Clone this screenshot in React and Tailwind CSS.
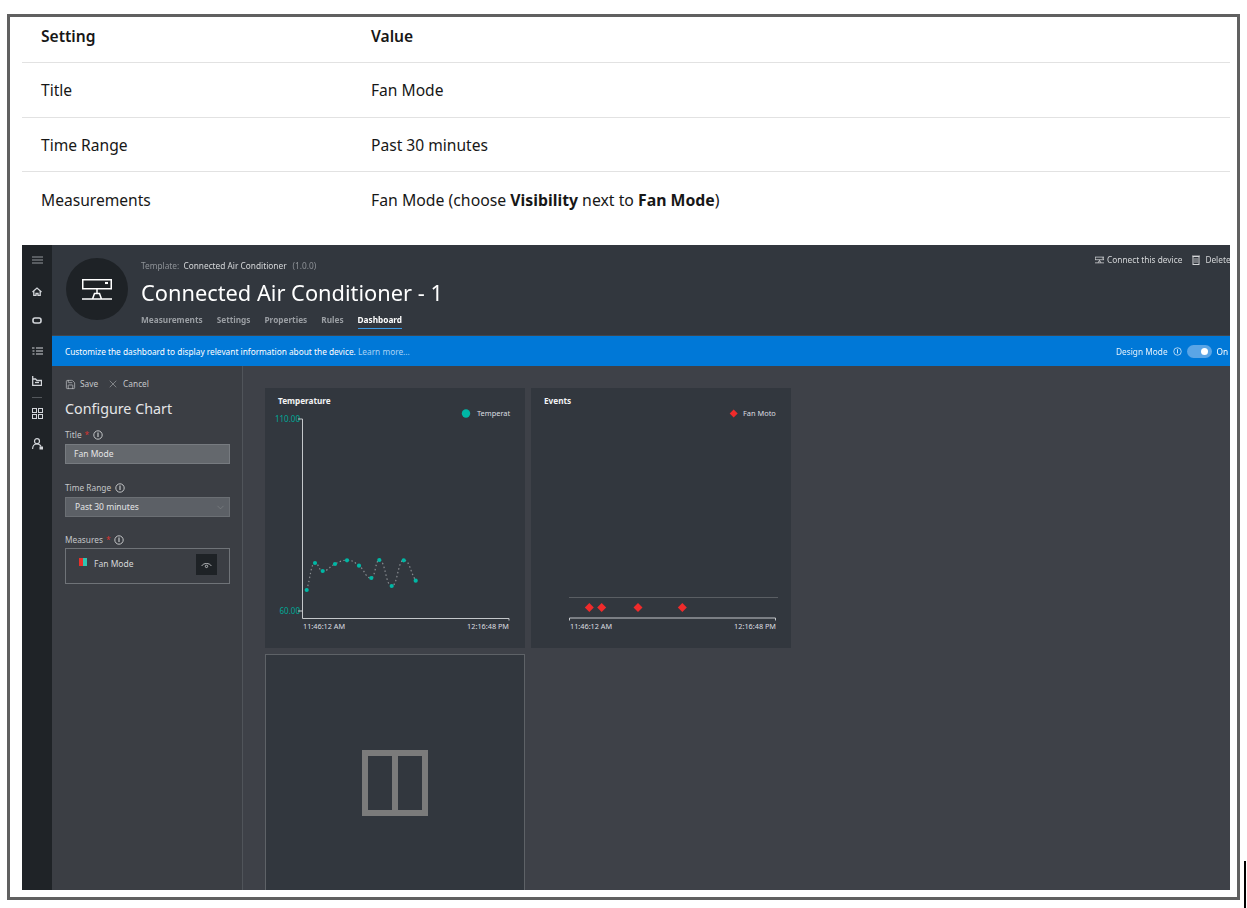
import { ChevronDown, Save, X } from "lucide-react";

const font = "font-['Noto_Sans',_'Open_Sans',_sans-serif]";

const rows = [
  { setting: "Title", value: "Fan Mode", height: "h-[55px] border-b border-[#e2e2e2]", pad: "pt-[2px]" },
  { setting: "Time Range", value: "Past 30 minutes", height: "h-[54px] border-b border-[#e2e2e2]", pad: "pt-[4px]" },
  {
    setting: "Measurements",
    value: (
      <span className="text-[15.800px]">
        Fan Mode (choose <b>Visibility</b> next to <b>Fan Mode</b>)
      </span>
    ),
    height: "h-[55px]",
    pad: "pt-[4px]",
  },
];

const tabs = ["Measurements", "Settings", "Properties", "Rules", "Dashboard"];

const tempPoints = [
  [41.7, 202],
  [50, 175],
  [57.7, 183],
  [70, 176],
  [82, 172.3],
  [94, 177.7],
  [106.3, 190],
  [114.3, 172],
  [126.7, 198],
  [138.7, 172.3],
  [150.7, 192.7],
];

// monotone curve: flat at peaks and troughs like the chart's smoothed line
const smoothPath = (pts) => {
  const slope = (a, b) => (b[1] - a[1]) / (b[0] - a[0]);
  const tangent = (i) => {
    if (i === 0) return slope(pts[0], pts[1]);
    if (i === pts.length - 1) return slope(pts[i - 1], pts[i]);
    const s0 = slope(pts[i - 1], pts[i]);
    const s1 = slope(pts[i], pts[i + 1]);
    return s0 * s1 <= 0 ? 0 : (s0 + s1) / 2;
  };
  let d = `M${pts[0][0]} ${pts[0][1]}`;
  for (let i = 0; i < pts.length - 1; i++) {
    const [x1, y1] = pts[i];
    const [x2, y2] = pts[i + 1];
    const h = (x2 - x1) / 2;
    d += ` C${x1 + h} ${y1 + tangent(i) * h} ${x2 - h} ${y2 - tangent(i + 1) * h} ${x2} ${y2}`;
  }
  return d;
};

const InfoIcon = ({ className }) => (
  <svg viewBox="0 0 10 10" className={className} fill="none" stroke="currentColor">
    <circle cx="5" cy="5" r="4.200" strokeWidth="0.9" />
    <path d="M5 2.500v4.600" strokeWidth="1.100" />
  </svg>
);

const DeviceIcon = ({ className, sw = 1.5 }) => (
  <svg viewBox="0 0 30 21" className={className} fill="none" stroke="currentColor" strokeWidth={sw}>
    <rect x="0.750" y="0.750" width="28.500" height="9" />
    <path d="M23 4h3" strokeWidth={sw * 1.4} />
    <path d="M15 10v4M10.500 20l2-5.500h5l2 5.500M0 20h30" />
  </svg>
);

const Sidebar = () => (
  <div className="w-[30px] shrink-0 bg-[#1f2327] flex flex-col items-center pt-[11px] text-[#d3d6da]">
    <svg viewBox="0 0 11 8" className="w-[11px] h-[8px] text-[#6d7175]" stroke="currentColor" strokeWidth="1.400">
      <path d="M0 1h11M0 4h11M0 7h11" />
    </svg>
    <svg viewBox="0 0 10 9" className="w-[10px] h-[9px] mt-[23px]" fill="none" stroke="currentColor" strokeWidth="1.300">
      <path d="M0.500 5 5 1l4.500 4M1.800 4v4.500h2.200V6.500h2v2h2.200V4" />
    </svg>
    <svg viewBox="0 0 10 7" className="w-[10px] h-[7px] mt-[21px]" fill="none" stroke="currentColor" strokeWidth="1.600">
      <rect x="1" y="1" width="8" height="5" rx="2" />
    </svg>
    <svg viewBox="0 0 11 8" className="w-[11px] h-[8px] mt-[23px]" fill="none" stroke="currentColor" strokeWidth="1.200">
      <path d="M4 1h7M4 4h7M4 7h7M0 1h2.500M0.500 4h2M0.500 7h2" />
    </svg>
    <svg viewBox="0 0 10 10" className="w-[10px] h-[10px] mt-[21px]" fill="none" stroke="currentColor" strokeWidth="1.300">
      <path d="M0.700 0v9.300h8.800V4.500H5L3.500 3H0.700" />
      <path d="M3 6.500h4" />
    </svg>
    <div className="w-[10px] h-px bg-[#54585c] mt-[11px]" />
    <div className="grid grid-cols-2 gap-px mt-[10px]">
      <div className="w-[5px] h-[5px] border border-[#d3d6da]" />
      <div className="w-[5px] h-[5px] border border-[#d3d6da]" />
      <div className="w-[5px] h-[5px] border border-[#d3d6da]" />
      <div className="w-[5px] h-[5px] border border-[#d3d6da]" />
    </div>
    <svg viewBox="0 0 11 12" className="w-[11px] h-[12px] mt-[19px]" fill="none" stroke="currentColor" strokeWidth="1.200">
      <circle cx="5" cy="3.200" r="2.500" />
      <path d="M0.600 11C0.600 8 2.500 6 5 6s3.500 1.300 4 2.500" />
      <rect x="7.500" y="8.500" width="3.500" height="3" fill="currentColor" stroke="none" />
    </svg>
  </div>
);

const Header = () => (
  <div className="h-[91px] bg-[#32373e] border-b border-[#42464c] flex items-start relative overflow-hidden">
    <div className="ml-[14px] mt-[13px] w-[62px] h-[62px] rounded-full bg-[#1e2226] flex items-center justify-center text-white">
      <DeviceIcon className="w-[30px] h-[21px]" />
    </div>
    <div className="ml-[13px] mt-[15px]">
      <div className="text-[8.300px] leading-[12px] text-[#8e9297]">
        Template: <span className="text-[#d5d7d9] ml-[2px]">Connected Air Conditioner</span>
        <span className="ml-[6px]">(1.0.0)</span>
      </div>
      <div className="text-[21.800px] leading-[30px] mt-[6px] text-white">Connected Air Conditioner - 1</div>
      <div className="flex gap-[14px] mt-[6px] text-[8.250px] leading-[12px] font-bold text-[#9a9ea3]">
        {tabs.map((t) => (
          <span
            key={t}
            className={t === "Dashboard" ? "text-white border-b border-[#3a9be8] pb-[2px]" : ""}
          >
            {t}
          </span>
        ))}
      </div>
    </div>
    <div className="absolute left-[1043px] top-[9px] flex items-center gap-[10px] text-[8.300px] leading-[12px] text-[#d5d7d9] whitespace-nowrap">
      <span className="flex items-center gap-[3px]">
        <DeviceIcon className="w-[9px] h-[8px]" sw={2.500} />
        Connect this device
      </span>
      <span className="flex items-center gap-[5px]">
        <svg viewBox="0 0 8 10" className="w-[8px] h-[10px]" fill="none" stroke="currentColor">
          <rect x="1" y="1.500" width="6" height="8" />
          <path d="M3 3v5M5 3v5M0 1h8" strokeWidth="0.800" />
        </svg>
        Delete
      </span>
    </div>
  </div>
);

const InfoBar = () => (
  <div className="h-[30px] bg-[#0078d7] flex items-center pl-[13px] pt-[2px] text-[8.300px] text-white relative overflow-hidden">
    <span>
      Customize the dashboard to display relevant information about the device.{" "}
      <span className="text-[#a9d3f5]">Learn more...</span>
    </span>
    <div className="absolute left-[1064px] top-[9px] flex items-center whitespace-nowrap">
      <span className="text-[#e5f1fb] mt-[1px]">Design Mode</span>
      <InfoIcon className="w-[9px] h-[9px] ml-[5px] text-[#cfe5f7]" />
      <span className="w-[25px] h-[13px] ml-[5px] rounded-full bg-[#5aa5e6] flex items-center justify-end pr-[4px]">
        <span className="w-[7px] h-[7px] rounded-full bg-white" />
      </span>
      <span className="ml-[5px] mt-[1px]">On</span>
    </div>
  </div>
);

const Label = ({ text, required }) => (
  <div className="flex items-center text-[8.300px] leading-[12px] text-[#c4c6c9]">
    {text}
    {required && <span className="text-[#d8342f] ml-[3px]">*</span>}
    <InfoIcon className="w-[10px] h-[10px] ml-[4px] text-[#d0d2d4]" />
  </div>
);

const ConfigPanel = () => (
  <div className="w-[191px] shrink-0 border-r border-[#50545a] bg-[#3b3e44] pl-[13px] pr-[12px] pt-[12px] text-[#c4c6c9]">
    <div className="flex items-center text-[8.300px] leading-[12px]">
      <Save size={11} strokeWidth={1.500} />
      <span className="ml-[4px]">Save</span>
      <X size={12} strokeWidth={1} className="ml-[9px]" />
      <span className="ml-[4px]">Cancel</span>
    </div>
    <div className="text-[14.300px] leading-[20px] mt-[9px] text-[#e4e5e7]">Configure Chart</div>
    <div className="mt-[10px]">
      <Label text="Title" required />
    </div>
    <div className="mt-[3px] h-[20px] bg-[#64686d] border border-[#777b80] flex items-center pl-[8px] text-[8.500px] text-[#e4e5e7]">
      Fan Mode
    </div>
    <div className="mt-[18px]">
      <Label text="Time Range" />
    </div>
    <div className="mt-[3px] h-[20px] bg-[#5c6066] border border-[#6b6f74] flex items-center justify-between pl-[9px] pr-[3px] text-[8.500px] text-[#e4e5e7]">
      Past 30 minutes
      <ChevronDown size={11} strokeWidth={1} className="text-[#8c9094]" />
    </div>
    <div className="mt-[17px]">
      <Label text="Measures" required />
    </div>
    <div className="mt-[2px] h-[36px] border border-[#6f7378] flex items-start pl-[13px] pr-[12px] pt-[5px] text-[8.500px] text-[#d5d7d9]">
      <div className="flex mt-[4px]">
        <span className="w-[4px] h-[8px] bg-[#e8312b]" />
        <span className="w-[4px] h-[8px] bg-[#2fc4b2]" />
      </div>
      <span className="ml-[7px] mt-[4px] leading-[12px]">Fan Mode</span>
      <div className="ml-auto w-[21px] h-[21px] bg-[#1e2226] flex items-center justify-center">
        <svg viewBox="0 0 12 8" className="w-[11px] h-[8px] text-[#d0d2d4]" fill="none" stroke="currentColor" strokeWidth="0.900">
          <path d="M0.800 5C2.500 1.500 9.500 1.500 11.200 5" />
          <circle cx="6" cy="5.500" r="1.300" />
        </svg>
      </div>
    </div>
  </div>
);

const axisLabel = { fontSize: 7.3, fill: "#dcdee0" };

const TemperatureChart = () => (
  <svg viewBox="0 0 260 260" className="w-[260px] h-[260px] block">
    <text x="13" y="16" fontSize="8.200" fontWeight="700" fill="#f2f3f4">Temperature</text>
    <circle cx="201" cy="25.500" r="4.200" fill="#00b7a5" />
    <text x="212" y="28" fontSize="7.400" fill="#dcdee0">Temperat</text>
    <text x="35" y="34" fontSize="8" fill="#00a896" textAnchor="end">110.00</text>
    <text x="35" y="226" fontSize="8" fill="#00a896" textAnchor="end">60.00</text>
    <path d="M33 31h4.500v199.500M33 223h4.500M37.500 230.500h206.500v2" fill="none" stroke="#c4c7ca" strokeWidth="1" />
    <path d={smoothPath(tempPoints)} fill="none" stroke="#8a8e92" strokeWidth="1.200" strokeDasharray="1.500 2.500" />
    {tempPoints.map(([x, y]) => (
      <circle key={x} cx={x} cy={y} r="2.100" fill="#00b7a5" />
    ))}
    <text x="38" y="241" {...axisLabel}>11:46:12 AM</text>
    <text x="244" y="241" {...axisLabel} textAnchor="end">12:16:48 PM</text>
  </svg>
);

const EventsChart = () => (
  <svg viewBox="0 0 260 260" className="w-[260px] h-[260px] block">
    <text x="13" y="16" fontSize="8.200" fontWeight="700" fill="#f2f3f4">Events</text>
    <path d="M202.700 21.500l4 4-4 4-4-4z" fill="#f02b2b" />
    <text x="212" y="28" fontSize="7.400" fill="#dcdee0">Fan Moto</text>
    <path d="M38 209.500h209" stroke="#5a5e63" strokeWidth="1" />
    <path d="M38.500 232.500v-2.500h206v2.500" fill="none" stroke="#c4c7ca" strokeWidth="1" />
    {[58.3, 70.7, 107, 151.3].map((x) => (
      <path key={x} d={`M${x} 215l4.500 4.500-4.500 4.500-4.500-4.500z`} fill="#f02b2b" />
    ))}
    <text x="39" y="241" {...axisLabel}>11:46:12 AM</text>
    <text x="245" y="241" {...axisLabel} textAnchor="end">12:16:48 PM</text>
  </svg>
);

const App = () => {
  return (
    <div className={`w-[1247px] h-[908px] bg-white pl-[7px] pt-[14px] relative overflow-hidden ${font}`}>
      <div className="w-[1233px] h-[886px] border-3 border-[#606060] pl-[12px] pr-[7px]">
        <table className="w-[1208px] table-fixed text-[15.600px] text-[#171717] border-collapse">
          <thead>
            <tr className="h-[45px] border-b border-[#e2e2e2] text-left">
              <th className="w-[349px] pl-[19px] pb-[5px] font-semibold">Setting</th>
              <th className="pb-[5px] font-semibold">Value</th>
            </tr>
          </thead>
          <tbody>
            {rows.map((r) => (
              <tr key={r.setting} className={r.height}>
                <td className={`pl-[19px] ${r.pad}`}>{r.setting}</td>
                <td className={r.pad}>{r.value}</td>
              </tr>
            ))}
          </tbody>
        </table>

        <div className="mt-[19px] h-[645px] flex overflow-hidden text-white blur-[0.3px]">
          <Sidebar />
          <div className="flex-1 min-w-0 flex flex-col">
            <Header />
            <InfoBar />
            <div className="flex-1 min-h-0 flex bg-[#3e4148]">
              <ConfigPanel />
              <div className="pl-[22px] pt-[22px] grid grid-cols-[260px_260px] gap-[6px] content-start">
                <div className="bg-[#32373e]">
                  <TemperatureChart />
                </div>
                <div className="bg-[#32373e]">
                  <EventsChart />
                </div>
                <div className="h-[260px] bg-[#32373e] border border-[#5e6267] flex justify-center pt-[95px]">
                  <div className="w-[66px] h-[66px] border-[6px] border-[#7b7b7b] flex justify-center">
                    <div className="w-[6px] bg-[#7b7b7b]" />
                  </div>
                </div>
              </div>
            </div>
          </div>
        </div>
      </div>
      <div className="absolute left-[1244px] top-[861px] w-[2px] h-[47px] bg-black" />
    </div>
  );
};

export default App;
